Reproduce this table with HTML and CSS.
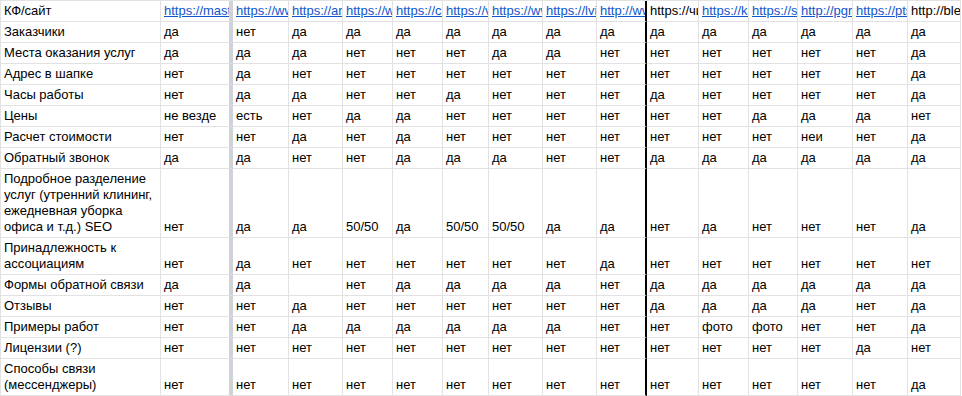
FILE: index.html
```html
<!DOCTYPE html>
<html lang="ru">
<head>
<meta charset="utf-8">
<title>КФ/сайт</title>
<link rel="stylesheet" href="styles.css">
</head>
<body>
<div class="sheet">
  <div class="row">
    <div class="cell">КФ/сайт</div>
    <div class="cell frz"><a href="#">https://master-clean.ru</a></div>
    <div class="cell"><a href="#">https://www.clean.ru</a></div>
    <div class="cell"><a href="#">https://art-clean.ru</a></div>
    <div class="cell"><a href="#">https://www.cleaning.ru</a></div>
    <div class="cell"><a href="#">https://clean.ru</a></div>
    <div class="cell"><a href="#">https://vclean.ru</a></div>
    <div class="cell"><a href="#">https://www.uborka.ru</a></div>
    <div class="cell"><a href="#">https://lvi-clean.ru</a></div>
    <div class="cell blk"><a href="#">http://www.clean.ru</a></div>
    <div class="cell">https://чистота.рф</div>
    <div class="cell"><a href="#">https://kliningcenter.ru</a></div>
    <div class="cell"><a href="#">https://sclean.ru</a></div>
    <div class="cell"><a href="#">http://pgroup.ru</a></div>
    <div class="cell"><a href="#">https://pts-clean.ru</a></div>
    <div class="cell">http://bleskclean.ru</div>
  </div>
  <div class="row">
    <div class="cell">Заказчики</div>
    <div class="cell frz">да</div><div class="cell">нет</div><div class="cell">да</div><div class="cell">да</div><div class="cell">да</div><div class="cell">да</div><div class="cell">да</div><div class="cell">да</div><div class="cell blk">да</div><div class="cell">да</div><div class="cell">да</div><div class="cell">да</div><div class="cell">да</div><div class="cell">да</div><div class="cell">да</div>
  </div>
  <div class="row">
    <div class="cell">Места оказания услуг</div>
    <div class="cell frz">да</div><div class="cell">да</div><div class="cell">да</div><div class="cell">нет</div><div class="cell">нет</div><div class="cell">нет</div><div class="cell">да</div><div class="cell">да</div><div class="cell blk">нет</div><div class="cell">нет</div><div class="cell">нет</div><div class="cell">нет</div><div class="cell">нет</div><div class="cell">нет</div><div class="cell">да</div>
  </div>
  <div class="row">
    <div class="cell">Адрес в шапке</div>
    <div class="cell frz">нет</div><div class="cell">да</div><div class="cell">нет</div><div class="cell">нет</div><div class="cell">нет</div><div class="cell">нет</div><div class="cell">нет</div><div class="cell">нет</div><div class="cell blk">нет</div><div class="cell">нет</div><div class="cell">нет</div><div class="cell">нет</div><div class="cell">нет</div><div class="cell">нет</div><div class="cell">да</div>
  </div>
  <div class="row">
    <div class="cell">Часы работы</div>
    <div class="cell frz">нет</div><div class="cell">да</div><div class="cell">да</div><div class="cell">нет</div><div class="cell">нет</div><div class="cell">да</div><div class="cell">нет</div><div class="cell">нет</div><div class="cell blk">нет</div><div class="cell">да</div><div class="cell">нет</div><div class="cell">нет</div><div class="cell">нет</div><div class="cell">нет</div><div class="cell">да</div>
  </div>
  <div class="row">
    <div class="cell">Цены</div>
    <div class="cell frz">не везде</div><div class="cell">есть</div><div class="cell">нет</div><div class="cell">да</div><div class="cell">да</div><div class="cell">нет</div><div class="cell">нет</div><div class="cell">нет</div><div class="cell blk">нет</div><div class="cell">нет</div><div class="cell">нет</div><div class="cell">да</div><div class="cell">да</div><div class="cell">да</div><div class="cell">нет</div>
  </div>
  <div class="row">
    <div class="cell">Расчет стоимости</div>
    <div class="cell frz">нет</div><div class="cell">нет</div><div class="cell">да</div><div class="cell">нет</div><div class="cell">да</div><div class="cell">нет</div><div class="cell">нет</div><div class="cell">нет</div><div class="cell blk">нет</div><div class="cell">нет</div><div class="cell">нет</div><div class="cell">нет</div><div class="cell">неи</div><div class="cell">нет</div><div class="cell">да</div>
  </div>
  <div class="row">
    <div class="cell">Обратный звонок</div>
    <div class="cell frz">да</div><div class="cell">да</div><div class="cell">нет</div><div class="cell">нет</div><div class="cell">да</div><div class="cell">да</div><div class="cell">да</div><div class="cell">нет</div><div class="cell blk">нет</div><div class="cell">да</div><div class="cell">да</div><div class="cell">да</div><div class="cell">да</div><div class="cell">да</div><div class="cell">да</div>
  </div>
  <div class="row">
    <div class="cell">Подробное разделение<br>услуг (утренний клининг,<br>ежедневная уборка<br>офиса и т.д.) SEO</div>
    <div class="cell frz">нет</div><div class="cell">да</div><div class="cell">да</div><div class="cell">50/50</div><div class="cell">да</div><div class="cell">50/50</div><div class="cell">50/50</div><div class="cell">да</div><div class="cell blk">да</div><div class="cell">нет</div><div class="cell">да</div><div class="cell">нет</div><div class="cell">нет</div><div class="cell">нет</div><div class="cell">да</div>
  </div>
  <div class="row">
    <div class="cell">Принадлежность к<br>ассоциациям</div>
    <div class="cell frz">нет</div><div class="cell">да</div><div class="cell">нет</div><div class="cell">нет</div><div class="cell">нет</div><div class="cell">нет</div><div class="cell">нет</div><div class="cell">нет</div><div class="cell blk">да</div><div class="cell">нет</div><div class="cell">нет</div><div class="cell">нет</div><div class="cell">нет</div><div class="cell">нет</div><div class="cell">нет</div>
  </div>
  <div class="row">
    <div class="cell">Формы обратной связи</div>
    <div class="cell frz">да</div><div class="cell">да</div><div class="cell"></div><div class="cell">нет</div><div class="cell">да</div><div class="cell">да</div><div class="cell">да</div><div class="cell">да</div><div class="cell blk">нет</div><div class="cell">да</div><div class="cell">да</div><div class="cell">да</div><div class="cell">да</div><div class="cell">да</div><div class="cell">да</div>
  </div>
  <div class="row">
    <div class="cell">Отзывы</div>
    <div class="cell frz">нет</div><div class="cell">нет</div><div class="cell">да</div><div class="cell">нет</div><div class="cell">нет</div><div class="cell">нет</div><div class="cell">нет</div><div class="cell">нет</div><div class="cell blk">нет</div><div class="cell">да</div><div class="cell">да</div><div class="cell">да</div><div class="cell">да</div><div class="cell">нет</div><div class="cell">да</div>
  </div>
  <div class="row">
    <div class="cell">Примеры работ</div>
    <div class="cell frz">нет</div><div class="cell">нет</div><div class="cell">да</div><div class="cell">да</div><div class="cell">да</div><div class="cell">да</div><div class="cell">да</div><div class="cell">да</div><div class="cell blk">нет</div><div class="cell">нет</div><div class="cell">фото</div><div class="cell">фото</div><div class="cell">нет</div><div class="cell">нет</div><div class="cell">да</div>
  </div>
  <div class="row">
    <div class="cell">Лицензии (?)</div>
    <div class="cell frz">нет</div><div class="cell">нет</div><div class="cell">нет</div><div class="cell">нет</div><div class="cell">нет</div><div class="cell">нет</div><div class="cell">нет</div><div class="cell">нет</div><div class="cell blk">нет</div><div class="cell">нет</div><div class="cell">нет</div><div class="cell">нет</div><div class="cell">нет</div><div class="cell">да</div><div class="cell">нет</div>
  </div>
  <div class="row">
    <div class="cell">Способы связи<br>(мессенджеры)</div>
    <div class="cell frz">нет</div><div class="cell">нет</div><div class="cell">нет</div><div class="cell">нет</div><div class="cell">нет</div><div class="cell">нет</div><div class="cell">нет</div><div class="cell">нет</div><div class="cell blk">нет</div><div class="cell">нет</div><div class="cell">нет</div><div class="cell">нет</div><div class="cell">нет</div><div class="cell">нет</div><div class="cell">да</div>
  </div>
</div>
</body>
</html>
```

FILE: styles.css
```css
html, body {
  margin: 0;
  padding: 0;
  background: #ffffff;
  overflow: hidden;
}

.sheet {
  width: max-content;
  border-top: 1px solid #e2e2e2;
  border-left: 1px solid #e2e2e2;
  font-family: "Liberation Sans", Arial, sans-serif;
  font-size: 13px;
  color: #000000;
}

.row {
  display: grid;
  grid-template-columns: 160px 72px 56px 54px 50px 50px 46px 54px 54px 50px 52px 50px 49px 55px 55px 53px;
}

.cell {
  box-sizing: border-box;
  min-height: 21px;
  padding: 2px 3px 2px 3px;
  line-height: 16px;
  border-right: 1px solid #e2e2e2;
  border-bottom: 1px solid #e2e2e2;
  white-space: nowrap;
  overflow: hidden;
  display: flex;
  align-items: flex-end;
}

.cell.frz {
  border-right: 4px solid #cfd3d8;
}

.cell.blk {
  border-right: 2px solid #000000;
}

.cell a {
  color: #1155cc;
  text-decoration: underline;
}
```
